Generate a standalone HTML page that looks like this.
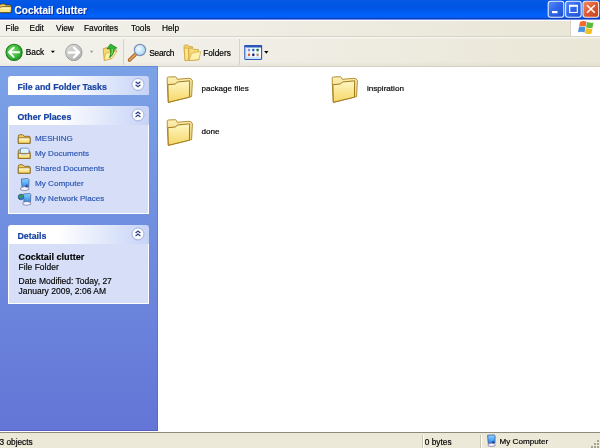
<!DOCTYPE html>
<html><head><meta charset="utf-8">
<style>
*{margin:0;padding:0;box-sizing:border-box}
html,body{width:600px;height:448px;overflow:hidden;background:#fff;font-family:"Liberation Sans",sans-serif}
body{filter:blur(0.3px)}
.a{position:absolute}
svg{position:absolute;overflow:visible}
.t{position:absolute;white-space:nowrap;line-height:1;-webkit-text-stroke:0.15px currentColor}
#title{left:0;top:0;width:600px;height:20px;background:linear-gradient(#0a5ae4 0px,#0058e6 2px,#0054e3 7px,#005cf2 12px,#0062fa 16px,#0a5cf0 17.5px,#0a3cbc 18px,#0a3cbc 19px,#6a90e8 19.5px,#6a90e8 20px)}
#menu{left:0;top:20px;width:600px;height:17px;background:linear-gradient(90deg,#f2f1ea 0%,#efede4 40%,#e9e6d6 100%);border-top:1px solid #fff;border-bottom:1px solid #d6d4c8}
#tb{left:0;top:37px;width:600px;height:29px;background:linear-gradient(rgba(255,255,255,0.7) 0px,rgba(255,255,255,0) 2px,rgba(0,0,0,0) 24px,rgba(110,100,60,0.06) 29px),linear-gradient(90deg,#f3f2eb 0%,#f0eee6 40%,#eae7d7 100%)}
#tbl{left:158px;top:66px;width:442px;height:1px;background:#d4d1c2}
#pane{left:0;top:66px;width:158px;height:365px;background:linear-gradient(#5a7fcf 0px,#7ba2e7 1.5px,#6375d6 363.5px,#5860c4 364px)}
#status{left:0;top:432px;width:600px;height:16px;background:#ece9d8;border-top:1px solid #8e8b7c}
.hdr{position:absolute;left:8px;width:141px;height:19px;border-radius:3px 3px 0 0;background:linear-gradient(90deg,#fff 0%,#fff 35%,#c6d3f7 100%)}
.hdr .ht{position:absolute;left:9.5px;top:6.6px;font-weight:bold;font-size:8.8px;color:#1a44a4;-webkit-text-stroke:0.2px #1a44a4;white-space:nowrap;line-height:1}
.body{position:absolute;left:8px;width:141px;background:#d6dff7;border:1px solid #fff;border-top:none}
.lnk{position:absolute;left:27px;font-size:8.1px;color:#2a52b0;white-space:nowrap;line-height:1;-webkit-text-stroke:0.15px #2152b8}
.mi{position:absolute;top:24px;font-size:8.3px;color:#000;white-space:nowrap;line-height:1;-webkit-text-stroke:0.18px #000}
.ct{position:absolute;font-size:8px;color:#000;white-space:nowrap;line-height:1;-webkit-text-stroke:0.18px #000}
</style></head><body>
<svg width="0" height="0" style="position:absolute">
<defs>
<radialGradient id="gGreen" cx="0.42" cy="0.4" r="0.62"><stop offset="0" stop-color="#7ede6c"/><stop offset="0.6" stop-color="#44bc40"/><stop offset="1" stop-color="#23982a"/></radialGradient>
<linearGradient id="gGray" x1="0" y1="0" x2="1" y2="1"><stop offset="0" stop-color="#e2e2e2"/><stop offset="1" stop-color="#a8a8a8"/></linearGradient>
<linearGradient id="gFold" x1="0" y1="0" x2="0" y2="1"><stop offset="0" stop-color="#fff7c4"/><stop offset="1" stop-color="#f5d666"/></linearGradient>
<linearGradient id="gFoldB" x1="0" y1="0" x2="0" y2="1"><stop offset="0" stop-color="#fdf0b4"/><stop offset="1" stop-color="#eccb62"/></linearGradient>
<linearGradient id="gBtn" x1="0" y1="0" x2="1" y2="1"><stop offset="0" stop-color="#5a8cf8"/><stop offset="0.5" stop-color="#2e64ea"/><stop offset="1" stop-color="#2050d0"/></linearGradient>
<linearGradient id="gClose" x1="0" y1="0" x2="1" y2="1"><stop offset="0" stop-color="#f08c64"/><stop offset="0.5" stop-color="#e05a34"/><stop offset="1" stop-color="#c0401c"/></linearGradient>
<linearGradient id="gScreen" x1="0" y1="0" x2="0" y2="1"><stop offset="0" stop-color="#8fd4ff"/><stop offset="1" stop-color="#2a8ae8"/></linearGradient>
<radialGradient id="gLens" cx="0.4" cy="0.4" r="0.6"><stop offset="0" stop-color="#f4fcff"/><stop offset="1" stop-color="#a6d6f6"/></radialGradient>
<radialGradient id="gChev" cx="0.5" cy="0.4" r="0.6"><stop offset="0" stop-color="#fff"/><stop offset="0.7" stop-color="#fff"/><stop offset="1" stop-color="#dfe6f8"/></radialGradient>
</defs>
</svg>

<div id="title" class="a"></div>
<!-- title folder icon -->
<svg style="left:0;top:0" width="14" height="16" viewBox="0 0 14 16">
<path d="M-0.5,5.5 Q0.5,3.8 2.5,3.8 L4.5,4 L6,5 L10,5 Q11.2,5 11.2,6.2 L11,12.6 L-0.5,12.6 Z" fill="#f0cc60" stroke="#3a3010" stroke-width="0.8"/>
<path d="M-0.5,7.6 Q1,6.6 3,6.6 L11.6,6.6 L11,12.6 L-0.5,12.6 Z" fill="#fbe68c" stroke="#4a3a10" stroke-width="0.7"/>
<path d="M1,8.2 L10.4,8.2" stroke="#fff8d0" stroke-width="0.9"/>
</svg>
<div class="t" style="left:14.6px;top:5.7px;font-size:10px;font-weight:bold;color:#fff;text-shadow:1px 1px 0 #0a2a9a">Cocktail clutter</div>
<!-- title buttons -->
<svg style="left:547px;top:0" width="53" height="19" viewBox="0 0 53 19">
<rect x="1.2" y="1.2" width="15.6" height="16" rx="2.5" fill="url(#gBtn)" stroke="#e8f0ff" stroke-width="1.1"/>
<rect x="5" y="11" width="5.5" height="2.2" fill="#fff"/>
<rect x="18.6" y="1.2" width="15.6" height="16" rx="2.5" fill="url(#gBtn)" stroke="#e8f0ff" stroke-width="1.1"/>
<rect x="22.7" y="5.5" width="7.6" height="7" fill="none" stroke="#fff" stroke-width="1.1"/>
<rect x="22.2" y="4.8" width="8.6" height="2" fill="#fff"/>
<rect x="36" y="1.2" width="15.6" height="16" rx="2.5" fill="url(#gClose)" stroke="#f4e8e4" stroke-width="1.1"/>
<path d="M40,5.2 L47.8,12.8 M47.8,5.2 L40,12.8" stroke="#fff" stroke-width="1.6"/>
</svg>

<div id="menu" class="a"></div>
<div class="mi" style="left:5.6px">File</div>
<div class="mi" style="left:29.6px">Edit</div>
<div class="mi" style="left:56px">View</div>
<div class="mi" style="left:84px">Favorites</div>
<div class="mi" style="left:131px">Tools</div>
<div class="mi" style="left:162px">Help</div>
<div class="a" style="left:570px;top:20px;width:30px;height:16px;background:#fff;border-left:1px solid #d8d4c6"></div>
<!-- windows logo -->
<svg style="left:577px;top:20px" width="18" height="16" viewBox="0 0 18 16">
<path d="M3,2 Q5.5,0.5 9.5,1.5 L8.5,6.8 Q5.5,5.5 2,6.5 Z" fill="#f06a30"/>
<path d="M10,2 Q13,3.2 16.5,2.5 L15.5,7.8 Q12.5,8.5 9,7.2 Z" fill="#5cb83c"/>
<path d="M2,7 Q5,6 8.5,7.4 L7.5,12.5 Q4.5,11.2 1,12.2 Z" fill="#4a90e0"/>
<path d="M9,8 Q12.2,9.2 15.5,8.5 L14.5,13.8 Q11.5,14.5 8,13.2 Z" fill="#f4c020"/>
</svg>

<div id="tb" class="a"></div><div id="tbl" class="a"></div>
<!-- back -->
<svg style="left:0;top:40px" width="30" height="24" viewBox="0 0 30 24">
<circle cx="14.1" cy="12.3" r="8.1" fill="url(#gGreen)" stroke="#188018" stroke-width="1.1"/>
<path d="M9,12.3 L13.6,7.7 M9,12.3 L13.6,16.9 M9.5,12.3 L19,12.3" stroke="#fff" stroke-width="2" stroke-linecap="round"/>
</svg>
<div class="ct" style="left:25.8px;top:48.4px;font-size:8.3px">Back</div>
<svg style="left:50px;top:50px" width="6" height="4" viewBox="0 0 6 4"><path d="M0.8,0.8 L5,0.8 L2.9,3 Z" fill="#000"/></svg>
<!-- forward -->
<svg style="left:60px;top:40px" width="30" height="24" viewBox="0 0 30 24">
<circle cx="13.8" cy="12.45" r="8.2" fill="url(#gGray)" stroke="#9a9a9a" stroke-width="0.9"/>
<path d="M19,12.45 L14,7.6 M19,12.45 L14,17.3 M18.5,12.45 L9,12.45" stroke="#fff" stroke-width="2.4" stroke-linecap="round"/>
</svg>
<svg style="left:89px;top:50px" width="6" height="4" viewBox="0 0 6 4"><path d="M0.8,0.8 L4.5,0.8 L2.65,3 Z" fill="#9c9c9c"/></svg>
<!-- up -->
<svg style="left:100px;top:40px" width="20" height="24" viewBox="0 0 20 24">
<path d="M3.1,8.8 L6.8,7.6 L9,8.6 L16,9.5 L16.3,11 L11.8,18.5 L4.3,20.5 Z" fill="#f6d870" stroke="#c09030" stroke-width="0.7"/>
<path d="M5.5,13.5 L10,12.2 L17.2,11 L12,18.4 L4.3,20.5 Z" fill="#fff0a4" stroke="#c8a040" stroke-width="0.6"/>
<path d="M10.5,4 L16.9,8 L14.4,8.4 Q14.2,14.2 9.6,17.8 Q11.4,13 10.2,8.7 L7,8.7 Z" fill="#34b834" stroke="#137a13" stroke-width="0.7" stroke-linejoin="round"/>
<path d="M12.2,9 Q12.8,12 11.5,15" stroke="#8ee88e" stroke-width="0.8" fill="none"/>
</svg>
<div class="a" style="left:123px;top:39px;width:1px;height:26px;background:#d6d3c4"></div>
<!-- search -->
<svg style="left:125px;top:40px" width="24" height="24" viewBox="0 0 24 24">
<path d="M10.5,14.2 L4.5,20" stroke="#8a4a10" stroke-width="3.4" stroke-linecap="round"/>
<path d="M10.5,14.2 L4.5,20" stroke="#e8a050" stroke-width="2" stroke-linecap="round"/>
<circle cx="15" cy="10" r="5.6" fill="url(#gLens)" stroke="#7e8eb4" stroke-width="1.2"/>
</svg>
<div class="ct" style="left:149.2px;top:48.6px;font-size:8.3px;letter-spacing:-0.2px">Search</div>
<!-- folders -->
<svg style="left:180px;top:40px" width="24" height="24" viewBox="0 0 24 24">
<path d="M4,6.6 Q4,5 5.5,5 L7.8,5 L9.3,6.5 L12.5,6.8 L12.5,19.5 L5,20.6 Z" fill="#f4d468" stroke="#c29a30" stroke-width="0.7"/>
<path d="M4.2,8.2 L8.6,8 L9,19.8 L5,20.6 Z" fill="#fbe48a" stroke="#c29a30" stroke-width="0.6"/>
<path d="M8.6,9.2 Q8.6,8.1 9.7,8.1 L12.4,8.1 L13.8,9.3 L18.4,9.6 L19,19.8 L9,20.6 Z" fill="#f6da74" stroke="#c29a30" stroke-width="0.7"/>
<path d="M9,20.6 L11.4,13.6 L15.5,12.2 L20.8,11.6 L18.8,19.6 Z" fill="#fff1ac" stroke="#c8a038" stroke-width="0.6"/>
</svg>
<div class="ct" style="left:203.2px;top:48.6px;font-size:8.3px">Folders</div>
<div class="a" style="left:239px;top:39px;width:1px;height:26px;background:#d6d3c4"></div>
<!-- views -->
<svg style="left:240px;top:40px" width="32" height="24" viewBox="0 0 32 24">
<rect x="4.8" y="5.6" width="16.8" height="13.8" rx="1" fill="#f4faff" stroke="#2a56b8" stroke-width="1.1"/>
<rect x="5.4" y="17" width="15.6" height="2" fill="#cfe6fa"/>
<rect x="4.3" y="5" width="17.8" height="2.6" rx="0.8" fill="#2a56b8"/>
<rect x="5.3" y="7" width="1" height="12" fill="#9cc0f0"/>
<rect x="7.8" y="8.8" width="2.4" height="2.4" rx="0.8" fill="#9088c4"/><rect x="12.1" y="8.8" width="2.4" height="2.4" rx="0.8" fill="#2a6ac8"/><rect x="16.4" y="8.8" width="2.4" height="2.4" rx="0.8" fill="#1c7a2c"/>
<rect x="7.8" y="13.6" width="2.4" height="2.4" rx="0.8" fill="#e05a28"/><rect x="12.1" y="13.6" width="2.4" height="2.4" rx="0.8" fill="#101870"/><rect x="16.4" y="13.6" width="2.4" height="2.4" rx="0.8" fill="#b09060"/>
<path d="M7.8,12 h2.4 M12.1,12 h2.4 M16.4,12 h2.4 M7.8,16.9 h2.4 M12.1,16.9 h2.4 M16.4,16.9 h2.4" stroke="#b8c4d8" stroke-width="0.6"/>
<path d="M24.2,11 L28.4,11 L26.3,13.7 Z" fill="#000"/>
</svg>

<div id="pane" class="a"></div><div class="a" style="left:157px;top:67px;width:1px;height:364px;background:rgba(40,50,150,0.18)"></div>
<div class="hdr" style="top:76px"><div class="ht">File and Folder Tasks</div></div>
<div class="hdr" style="top:106px"><div class="ht">Other Places</div></div>
<div class="body" style="top:125px;height:89px"></div>
<div class="hdr" style="top:225px"><div class="ht">Details</div></div>
<div class="body" style="top:244px;height:60px"></div>
<!-- chevrons -->
<svg style="left:130px;top:76px" width="18" height="20" viewBox="0 0 18 20">
<circle cx="8" cy="8.5" r="6" fill="url(#gChev)" stroke="#a6b0d8" stroke-width="1"/>
<path d="M5.6,5.8 L8,7.8 L10.4,5.8 M5.6,8.8 L8,10.8 L10.4,8.8" fill="none" stroke="#2a3f8c" stroke-width="1.2"/>
</svg>
<svg style="left:130px;top:106px" width="18" height="20" viewBox="0 0 18 20">
<circle cx="8" cy="9" r="6" fill="url(#gChev)" stroke="#a6b0d8" stroke-width="1"/>
<path d="M5.6,8 L8,6 L10.4,8 M5.6,11 L8,9 L10.4,11" fill="none" stroke="#2a3f8c" stroke-width="1.2"/>
</svg>
<svg style="left:130px;top:225px" width="18" height="20" viewBox="0 0 18 20">
<circle cx="8" cy="9" r="6" fill="url(#gChev)" stroke="#a6b0d8" stroke-width="1"/>
<path d="M5.6,8 L8,6 L10.4,8 M5.6,11 L8,9 L10.4,11" fill="none" stroke="#2a3f8c" stroke-width="1.2"/>
</svg>

<!-- other places icons -->
<svg style="left:16px;top:132px" width="16" height="75" viewBox="0 0 16 75">
<!-- MESHING folder -->
<path d="M2.3,4.2 Q2.3,2.7 3.7,2.7 L6.6,2.7 L8.2,4.3 L13,4.3 Q14.1,4.3 14.1,5.4 L14.1,11.3 L2.3,11.3 Z" fill="#efc95c" stroke="#7e5c16" stroke-width="0.8"/>
<path d="M2.3,5.9 L14.1,5.9 L14.1,11.3 L2.3,11.3 Z" fill="url(#gFold)" stroke="#7e5c16" stroke-width="0.8"/>
<path d="M3,6.8 L13.4,6.8" stroke="#fff8d8" stroke-width="0.7"/>
<!-- My Documents -->
<path d="M2.3,19.2 Q2.3,17.7 3.7,17.7 L6.6,17.7 L8.2,19.3 L13,19.3 Q14.1,19.3 14.1,20.4 L14.1,26.4 L2.3,26.4 Z" fill="#efc95c" stroke="#7e5c16" stroke-width="0.8"/>
<path d="M4.6,16.2 L12,16.2 L13,17.2 L13,23 L4.2,23 Z" fill="#e2f2fc" stroke="#4a7cc0" stroke-width="0.7"/>
<path d="M2.3,21.4 L14.1,21.4 L14.1,26.4 L2.3,26.4 Z" fill="url(#gFold)" stroke="#7e5c16" stroke-width="0.8"/>
<path d="M5,22.6 L11.4,22.6" stroke="#a8c4e4" stroke-width="0.9"/>
<!-- Shared Documents -->
<path d="M2.3,34.4 Q2.3,32.7 3.7,32.7 L6.6,32.7 L8.2,34.3 L13,34.3 Q14.1,34.3 14.1,35.4 L14.1,41.2 L2.3,41.2 Z" fill="#efc95c" stroke="#7e5c16" stroke-width="0.8"/>
<path d="M2.3,35.9 L14.1,35.9 L14.1,41.2 L2.3,41.2 Z" fill="url(#gFold)" stroke="#7e5c16" stroke-width="0.8"/>
<path d="M3,36.8 L13.4,36.8" stroke="#fff8d8" stroke-width="0.7"/>
<!-- My Computer -->
<path d="M5.3,47 L12,46.5 L13,47.5 L12.8,54.8 L6,55.5 Z" fill="url(#gScreen)" stroke="#3c5a9a" stroke-width="0.7"/>
<path d="M4.5,56 Q8,53.5 12.8,55.5 L12.8,57.5 Q9,59.5 5,58 Z" fill="#f4f4fa" stroke="#5a5a8a" stroke-width="0.6"/>
<path d="M9,54.5 L11.2,52 L11.5,55.5 Z" fill="#3a3a8a"/>
<!-- My Network Places -->
<circle cx="5" cy="65" r="2.8" fill="#2a70c8" stroke="#1a3a6a" stroke-width="0.6"/>
<path d="M3.2,63.6 Q5.6,64.2 5.2,66.8 M6,63 L7.2,64.6" stroke="#3cb040" stroke-width="1.1" fill="none"/>
<path d="M7.5,62 L14,61.5 L14.8,62.5 L14.5,69.5 L8,70.2 Z" fill="url(#gScreen)" stroke="#3c5a9a" stroke-width="0.7"/>
<path d="M6.8,70.5 Q10,68.5 14.6,70.2 L14.6,72.3 Q11,74 7.2,72.8 Z" fill="#f4f4fa" stroke="#5a5a8a" stroke-width="0.6"/>
</svg>
<div class="lnk" style="left:35px;top:134.8px">MESHING</div>
<div class="lnk" style="left:35px;top:149.8px">My Documents</div>
<div class="lnk" style="left:35px;top:164.8px">Shared Documents</div>
<div class="lnk" style="left:35px;top:179.8px">My Computer</div>
<div class="lnk" style="left:35px;top:194.8px">My Network Places</div>
<div class="t" style="left:18.6px;top:252.5px;font-size:9.1px;font-weight:bold;color:#000">Cocktail clutter</div>
<div class="t" style="left:18.6px;top:263.1px;font-size:8.5px;color:#000">File Folder</div>
<div class="t" style="left:18.6px;top:277px;font-size:8.5px;color:#000">Date Modified: Today, 27</div>
<div class="t" style="left:18.6px;top:286.6px;font-size:8.5px;color:#000">January 2009, 2:06 AM</div>

<!-- content folders -->
<svg style="left:162px;top:72px" width="36" height="36" viewBox="0 0 36 36"><use href="#bigfolder"/></svg>
<svg style="left:327px;top:72px" width="36" height="36" viewBox="0 0 36 36"><use href="#bigfolder"/></svg>
<svg style="left:162px;top:115px" width="36" height="36" viewBox="0 0 36 36"><use href="#bigfolder"/></svg>
<svg width="0" height="0"><defs>
<g id="bigfolder">
<path d="M5.2,6.2 Q5.2,5 6.5,5 L13.2,4.7 Q14.5,4.8 15.2,7.3 L27,6.3 Q29.6,6.2 30.4,8.8 L29.6,24.6 L6.3,30.4 L5.3,12 Z" fill="url(#gFoldB)" stroke="#ad8424" stroke-width="0.9"/>
<path d="M5.9,12.7 L13.2,12 Q14.4,11.6 15.4,10 L27.7,8.8 L27.4,25.2 L6.3,30.3 Z" fill="url(#gFold)" stroke="#a27a1c" stroke-width="1"/>
</g>
</defs></svg>
<div class="ct" style="left:201.5px;top:85.2px;font-size:8.1px">package files</div>
<div class="ct" style="left:367px;top:84.9px;font-size:8.1px">inspiration</div>
<div class="ct" style="left:201.5px;top:128.4px;font-size:8.1px">done</div>

<div id="status" class="a"></div>
<div class="ct" style="left:-0.5px;top:437.7px;font-size:8.3px">3 objects</div>
<div class="a" style="left:422px;top:435px;width:1px;height:13px;background:#c8c5b4"></div>
<div class="a" style="left:423px;top:435px;width:1px;height:13px;background:#fff"></div>
<div class="ct" style="left:424.8px;top:437.7px;font-size:8.3px">0 bytes</div>
<div class="a" style="left:480px;top:435px;width:1px;height:13px;background:#c8c5b4"></div>
<div class="a" style="left:481px;top:435px;width:1px;height:13px;background:#fff"></div>
<svg style="left:484px;top:433px" width="14" height="15" viewBox="0 0 14 15">
<path d="M3.6,2.2 L10.2,1.9 L11.1,2.7 L11,9.9 L4.2,10.3 Z" fill="url(#gScreen)" stroke="#2c4a8a" stroke-width="0.7"/>
<path d="M4,11.1 Q7.2,9.6 11,10.6 L11,12.8 Q7.6,14.1 4.4,13 Z" fill="#f2f2fa" stroke="#6a5aa0" stroke-width="0.6"/>
<path d="M7.5,9.8 L9.6,7.4 L10,10.2 Z" fill="#2a2a8a"/>
</svg>
<div class="ct" style="left:499.5px;top:437.7px;font-size:8.1px">My Computer</div>
<svg style="left:588px;top:438px" width="12" height="10" viewBox="0 0 12 10">
<rect x="9" y="2" width="2" height="2" fill="#a8a590"/>
<rect x="6" y="5" width="2" height="2" fill="#a8a590"/><rect x="9" y="5" width="2" height="2" fill="#a8a590"/>
<rect x="3" y="8" width="2" height="2" fill="#a8a590"/><rect x="6" y="8" width="2" height="2" fill="#a8a590"/><rect x="9" y="8" width="2" height="2" fill="#a8a590"/>
</svg>
</body></html>
